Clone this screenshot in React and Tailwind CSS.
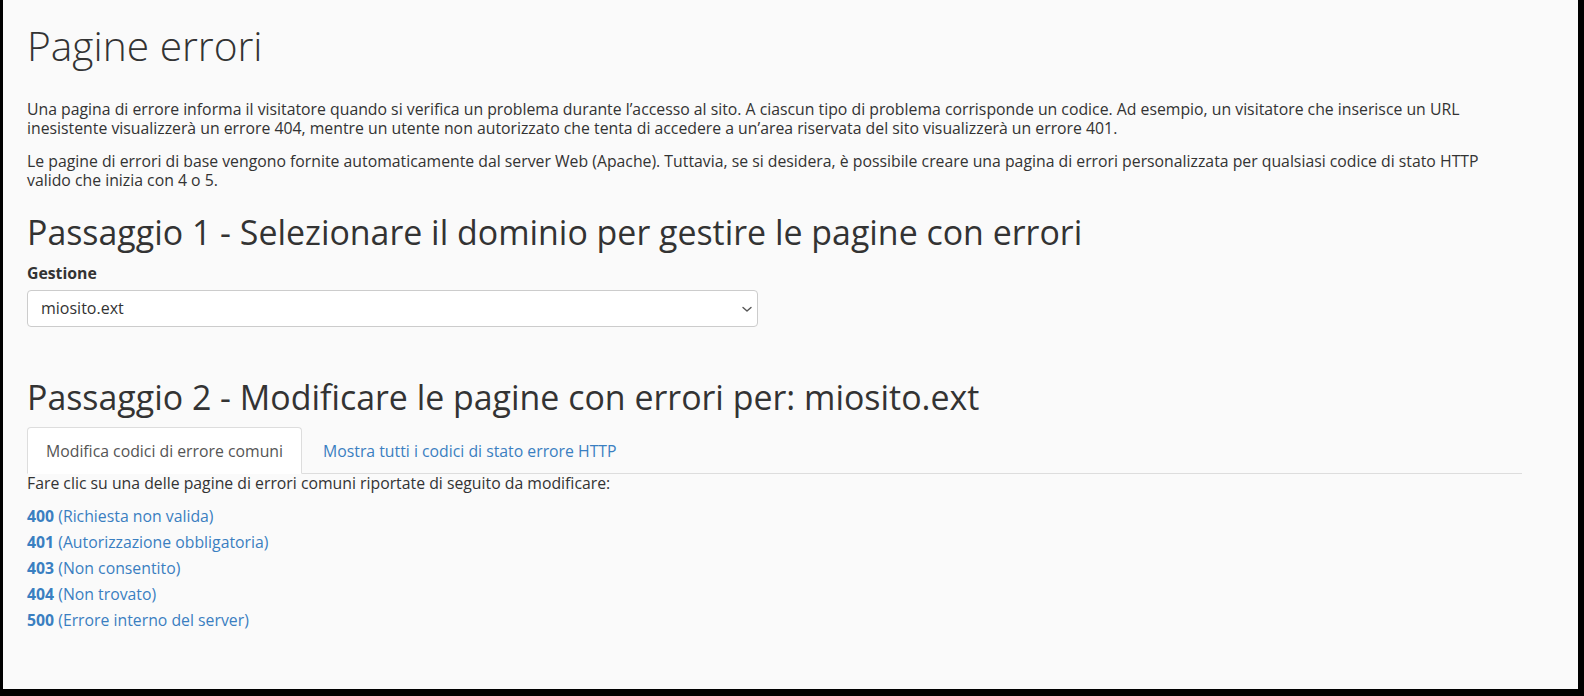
export default function App() {
  const links = [
    ["400", "(Richiesta non valida)"],
    ["401", "(Autorizzazione obbligatoria)"],
    ["403", "(Non consentito)"],
    ["404", "(Non trovato)"],
    ["500", "(Errore interno del server)"],
  ];
  return (
    <div className="w-[1584px] h-[696px] bg-black pl-[3px] pr-[6px] pb-[7px] flex">
      <div
        className="flex-1 bg-[#fafafa] text-[#333] pl-[24px] pr-[56px] pt-[18px] text-[15.8px] leading-[19px] overflow-hidden"
        style={{ fontFamily: '"Open Sans", "Noto Sans", sans-serif' }}
      >
        <h1 className="text-[40.7px] leading-[54px] font-light text-[#333] mb-[28px]">Pagine errori</h1>
        <p className="mb-[14px]">
          Una pagina di errore informa il visitatore quando si verifica un problema durante l’accesso al sito. A ciascun tipo di problema corrisponde un codice. Ad esempio, un visitatore che inserisce un URL inesistente visualizzerà un errore 404, mentre un utente non autorizzato che tenta di accedere a un’area riservata del sito visualizzerà un errore 401.
        </p>
        <p className="mb-[22px]">
          Le pagine di errori di base vengono fornite automaticamente dal server Web (Apache). Tuttavia, se si desidera, è possibile creare una pagina di errori personalizzata per qualsiasi codice di stato HTTP valido che inizia con 4 o 5.
        </p>
        <h2 className="text-[33.9px] leading-[40px] font-normal mb-[12px]">
          Passaggio 1 - Selezionare il dominio per gestire le pagine con errori
        </h2>
        <div className="font-bold mb-[7px]">Gestione</div>
        <div className="w-[731px] h-[37px] bg-white border border-[#ccc] rounded-[4px] flex items-center justify-between pl-[13px] pr-[4px] text-[16px] text-[#333]">
          <span>miosito.ext</span>
          <svg width="12" height="12" viewBox="0 0 12 12" fill="none" stroke="#555" strokeWidth="1.4" strokeLinecap="round" strokeLinejoin="round">
            <path d="M2 4.5 L6 8 L10 4.5" />
          </svg>
        </div>
        <h2 className="text-[33.9px] leading-[40px] font-normal mt-[50px] mb-[10px]">
          Passaggio 2 - Modificare le pagine con errori per: miosito.ext
        </h2>
        <div className="flex border-b border-[#ddd] items-end">
          <div className="bg-white border border-[#ddd] border-b-white -mb-px rounded-t-[4px] px-[18px] pt-[14px] pb-[12px] text-[#555]">
            Modifica codici di errore comuni
          </div>
          <div className="px-[20px] pt-[14px] pb-[12px] text-[#3a7fc1] -mb-px border border-transparent">
            Mostra tutti i codici di stato errore HTTP
          </div>
        </div>
        <p className="mb-[10px]">Fare clic su una delle pagine di errori comuni riportate di seguito da modificare:</p>
        <ul className="flex flex-col">
          {links.map(([code, label]) => (
            <li key={code} className="leading-[26px] text-[#3a7fc1]">
              <span className="font-bold">{code}</span> {label}
            </li>
          ))}
        </ul>
      </div>
    </div>
  );
}
